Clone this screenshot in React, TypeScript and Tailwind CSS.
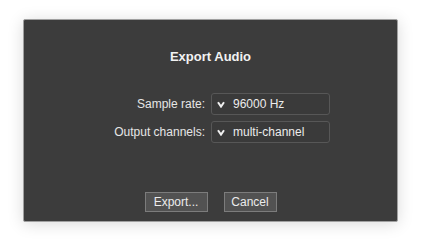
const font = { fontFamily: '"Liberation Sans", Arial, sans-serif' };

const Chevron = () => (
    <svg width="8" height="7" viewBox="0 0 8 7" className="shrink-0">
        <path d="M1 1.2 L4 5.6 L7 1.2" fill="none" stroke="#f0f0f0" strokeWidth="2" strokeLinejoin="miter" />
    </svg>
);

type SelectProps = { value: string };

const Select = ({ value }: SelectProps) => (
    <div className="flex h-[22px] w-[119px] items-center gap-[8px] rounded-[3px] border border-[#575757] bg-[#3a3a3a] pl-[5px] text-[12px] text-[#ececec]">
        <Chevron />
        <span>{value}</span>
    </div>
);

const App = () => {
    return (
        <div className="h-[250px] w-[421px] bg-white pt-[19px] pl-[23px]" style={font}>
            <div className="flex h-[203px] w-[375px] flex-col rounded-[2px] border border-[#a0a0a0] bg-[#3c3c3c] shadow-[0_2px_16px_rgba(0,0,0,0.15)]">
                <h1 className="mt-[29px] text-center text-[13px] leading-[16px] font-bold text-[#f2f2f2]">
                    Export Audio
                </h1>
                <div className="mt-[28px] grid grid-cols-[181px_119px] gap-x-[6px] gap-y-[6px] text-[12px] text-[#e6e6e6]">
                    <span className="self-center text-right">Sample rate:</span>
                    <Select value="96000 Hz" />
                    <span className="self-center text-right">Output channels:</span>
                    <Select value="multi-channel" />
                </div>
                <div className="mt-[49px] flex justify-center gap-4 text-[12px] text-[#ececec]">
                    <button className="h-[20px] w-[63px] border border-[#7c7c7c] bg-[#525252]">Export...</button>
                    <button className="h-[20px] w-[53px] border border-[#7c7c7c] bg-[#525252]">Cancel</button>
                </div>
            </div>
        </div>
    );
};

export default App;
